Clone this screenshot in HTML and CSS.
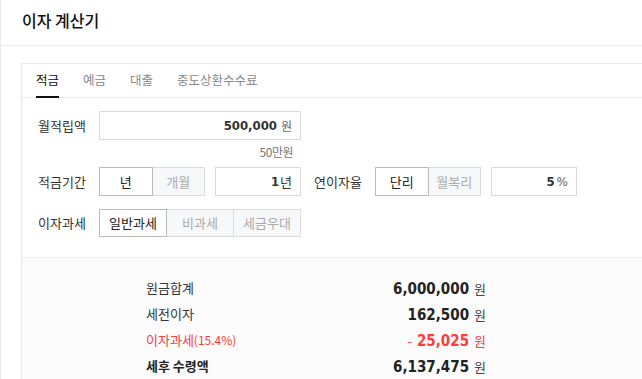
FILE: index.html
```html
<!DOCTYPE html>
<html>
	<head>
		<meta charset="utf-8" />
		<title>이자 계산기</title>
	<link rel="stylesheet" href="styles.css">
	</head>
	<body>
	<div class="page">
		<div class="head">이자 계산기</div>
		<div class="main">
			<div class="card">
				<ul class="tabs">
					<li class="on">적금</li>
					<li>예금</li>
					<li>대출</li>
					<li>중도상환수수료</li>
				</ul>
				<div class="form">
					<div class="row">
						<span class="lbl">월적립액</span>
						<div class="inp wide"><b>500,000</b><span class="unit">원</span></div>
					</div>
					<div class="hint">50만원</div>
					<div class="row">
						<span class="lbl">적금기간</span>
						<div class="seg">
							<span class="on">년</span>
							<span>개월</span>
						</div>
						<div class="inp small"><b>1</b><span class="unit2">년</span></div>
						<span class="lbl lbl2">연이자율</span>
						<div class="seg">
							<span class="on">단리</span>
							<span>월복리</span>
						</div>
						<div class="inp small"><b>5</b><span class="unit pct">%</span></div>
					</div>
					<div class="row row3">
						<span class="lbl">이자과세</span>
						<div class="seg seg3">
							<span class="on">일반과세</span>
							<span>비과세</span>
							<span>세금우대</span>
						</div>
					</div>
				</div>
				<div class="result">
					<div class="res-row">
						<span class="rl">원금합계</span>
						<span class="rv"><b>6,000,000</b><i>원</i></span>
					</div>
					<div class="res-row">
						<span class="rl">세전이자</span>
						<span class="rv"><b>162,500</b><i>원</i></span>
					</div>
					<div class="res-row red">
						<span class="rl">이자과세<small>(15.4%)</small></span>
						<span class="rv"><em>-</em><b>25,025</b><i>원</i></span>
					</div>
					<div class="res-row total">
						<span class="rl">세후 수령액</span>
						<span class="rv"><b>6,137,475</b><i>원</i></span>
					</div>
				</div>
			</div>
		</div>
	</div>
	</body>
</html>
```

FILE: styles.css
```css
body{
	margin: 0;
	background: #fff;
	font-family: "Noto Sans CJK KR", "Noto Sans", sans-serif;
	color: #333;
}
.page{
	border-left: 1px solid #e6e9ee;
	height: 379px;
	overflow: hidden;
}
.head{
	height: 46px;
	box-sizing: border-box;
	padding: 10px 0 0 21px;
	line-height: 20px;
	font-size: 16px;
	font-weight: 500;
	color: #111;
	border-bottom: 1px solid #ededed;
}
.main{
	padding: 17px 0 0 20px;
}
.card{
	border: 1px solid #e8e8e8;
	border-right: none;
	border-bottom: none;
}
.tabs{
	list-style: none;
	margin: 0;
	padding: 0 0 0 14px;
	display: flex;
	gap: 24px;
	height: 33px;
	border-bottom: 1px solid #ececec;
}
.tabs li{
	font-size: 12.5px;
	line-height: 31px;
	color: #888;
	border-bottom: 2px solid transparent;
	margin-bottom: -1px;
}
.tabs li.on{
	color: #111;
	border-bottom-color: #111;
}
.form{
	padding: 13px 0 20px 16px;
}
.row{
	display: flex;
	align-items: center;
	height: 29px;
}
.row3{
	margin-top: 12px;
	height: 29px;
}
.lbl{
	width: 61px;
	font-size: 13px;
	color: #333;
}
.lbl2{
	margin-left: 13px;
}
.inp{
	box-sizing: border-box;
	height: 29px;
	border: 1px solid #dadada;
	display: flex;
	align-items: center;
	justify-content: flex-end;
	padding-right: 8px;
	background: #fff;
}
.inp b{
	font-family: "DejaVu Sans", sans-serif;
	font-stretch: condensed;
	font-size: 13px;
	font-weight: bold;
	color: #333;
}
.wide{
	width: 202px;
}
.small{
	width: 86px;
	margin-left: 10px;
}
.unit{
	font-size: 12px;
	color: #666;
	margin-left: 4px;
}
.unit2{
	font-size: 13px;
	color: #333;
	margin-left: 1px;
}
.pct{
	margin-left: 2px;
	font-family: "DejaVu Sans", sans-serif;
}
.hint{
	width: 255px;
	text-align: right;
	font-size: 12px;
	line-height: 24px;
	height: 27px;
	color: #777;
	letter-spacing: -0.5px;
}
.seg{
	display: flex;
}
.seg span{
	box-sizing: border-box;
	width: 53.5px;
	height: 29px;
	line-height: 27px;
	text-align: center;
	font-size: 13px;
	color: #aaa;
	background: #f7f8fa;
	border: 1px solid #dcdcdc;
	margin-left: -1px;
	position: relative;
}
.seg span:first-child{
	margin-left: 0;
}
.seg span.on{
	background: #fff;
	color: #222;
	border-color: #bbb;
	z-index: 1;
}
.seg3 span{
	width: 68px;
	height: 28px;
	line-height: 26px;
}
.result{
	background: #fcfcfc;
	border-top: 1px solid #ececec;
	padding: 16px 0 0 124px;
	height: 200px;
}
.res-row{
	width: 340px;
	display: flex;
	justify-content: space-between;
	align-items: center;
	height: 26px;
}
.rl{
	font-size: 13px;
	color: #333;
}
.rl small{
	font-size: 12px;
}
.rv b{
	font-family: "DejaVu Sans", sans-serif;
	font-stretch: condensed;
	font-size: 15px;
	font-weight: bold;
	color: #222;
}
.rv i{
	font-style: normal;
	font-size: 13px;
	color: #444;
	margin-left: 5px;
}
.rv em{
	font-style: normal;
	font-size: 13px;
	margin-right: 5px;
}
.red .rl, .red .rv b, .red .rv i, .red .rv em{
	color: #ff3b3b;
}
.total .rl{
	font-weight: bold;
	color: #222;
}
```
